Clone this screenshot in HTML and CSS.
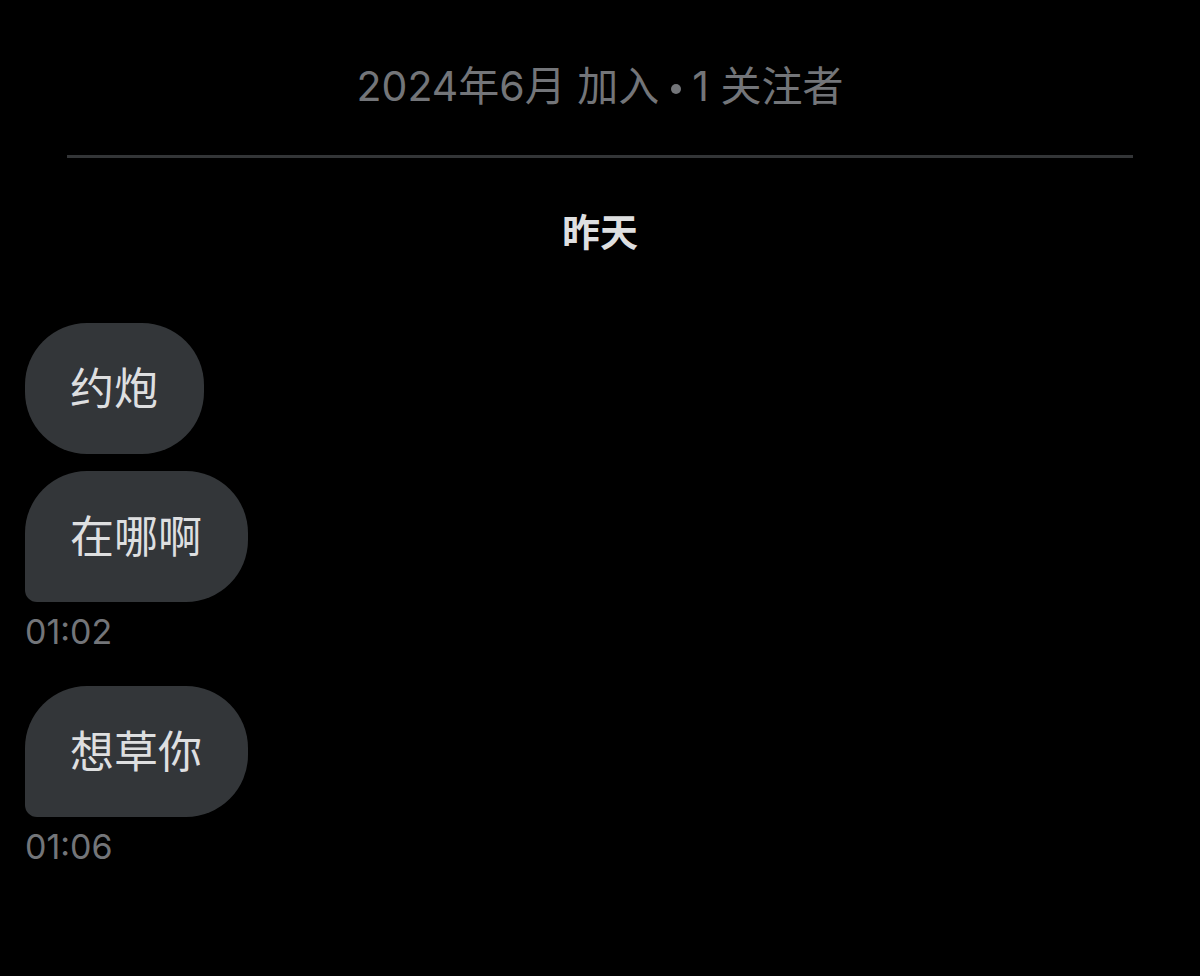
FILE: index.html
```html
<!DOCTYPE html>
<html lang="zh-CN">
<head>
    <meta charset="utf-8">
    <meta name="viewport" content="width=device-width, initial-scale=1">
    <title>私信</title>
    <link rel="stylesheet" href="styles.css">
</head>

<body>
    <header class="profile">
        <p class="profile-info">2024年6月 加入 <span class="dot"></span> 1 关注者</p>
    </header>
    <main class="chat">
        <h2 class="day">昨天</h2>
        <div class="group">
            <p class="bubble">约炮</p>
            <p class="bubble last">在哪啊</p>
            <time class="time">01:02</time>
        </div>
        <div class="group">
            <p class="bubble last">想草你</p>
            <time class="time">01:06</time>
        </div>
    </main>
</body>

</html>
```
FILE: styles.css
```css
* {
    box-sizing: border-box;
}

body {
    margin: 0;
    background-color: #000;
    color: #dedfe0;
    font-family: Inter, "Noto Sans CJK SC", sans-serif;
}

p, h2 {
    margin: 0;
}

.profile {
    margin: 0 67px;
    padding: 56px 0 39px;
    border-bottom: 3px solid #333537;
    text-align: center;
}

.profile-info {
    color: #737579;
    font-size: 41px;
    line-height: 60px;
}

.dot {
    display: inline-block;
    width: 10px;
    height: 10px;
    border-radius: 50%;
    background-color: #737579;
    vertical-align: 7px;
}

.chat {
    padding: 44px 25px;
}

.day {
    margin-bottom: 61px;
    font-size: 38px;
    font-weight: 700;
    line-height: 60px;
    text-align: center;
}

.group {
    display: flex;
    flex-direction: column;
    align-items: flex-start;
    margin-bottom: 24px;
}

.bubble {
    margin-bottom: 17px;
    padding: 36px 46px 34px 45px;
    border-radius: 62px;
    background-color: #333639;
    font-size: 44px;
    line-height: 61px;
}

.bubble.last {
    margin-bottom: 0;
    border-bottom-left-radius: 12px;
}

.time {
    color: #737579;
    font-size: 34px;
    line-height: 60px;
}
```
